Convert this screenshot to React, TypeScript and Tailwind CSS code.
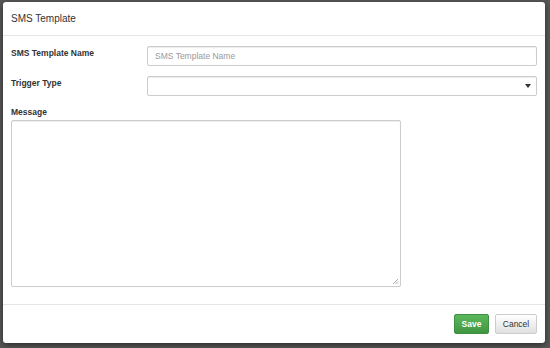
import React from 'react';

export default function App() {
  return (
    <div
      className="w-[550px] h-[348px] bg-[#575757] pt-[2px] pl-[3px]"
      style={{ fontFamily: '"Liberation Sans", Arial, sans-serif' }}
    >
      <div className="w-[542px] h-[341px] bg-white rounded-[3px] flex flex-col shadow-[0_2px_6px_rgba(0,0,0,0.5)]">
        {/* header */}
        <div className="h-[34px] shrink-0 border-b border-[#e5e5e5] px-[8px] pt-[11px] text-[10px] leading-[12px] text-[#333]">
          SMS Template
        </div>

        {/* body */}
        <div className="flex-1 px-[8px] pt-[10px]">
          <div className="flex">
            <label className="w-[136px] shrink-0 pt-[1px] text-[8.5px] leading-[12px] font-bold text-[#333]">
              SMS Template Name
            </label>
            <input
              placeholder="SMS Template Name"
              className="w-[390px] h-[20px] rounded-[2px] border border-[#ccc] px-[7px] text-[8.5px] text-[#555] placeholder:text-[#999] outline-none shadow-[inset_0_1px_1px_rgba(0,0,0,0.075)]"
            />
          </div>
          <div className="flex mt-[10px]">
            <label className="w-[136px] shrink-0 pt-[1px] text-[8.5px] leading-[12px] font-bold text-[#333]">
              Trigger Type
            </label>
            <div className="relative w-[390px] h-[20px] rounded-[2px] border border-[#ccc] shadow-[inset_0_1px_1px_rgba(0,0,0,0.075)]">
              <span className="absolute right-[5px] top-[7px] w-0 h-0 border-l-[3px] border-r-[3px] border-t-[4px] border-l-transparent border-r-transparent border-t-[#333]" />
            </div>
          </div>
          <div className="mt-[10px] text-[8.5px] leading-[12px] font-bold text-[#333]">Message</div>
          <div className="relative mt-[2px] w-[390px] h-[167px] rounded-[2px] border border-[#ccc] shadow-[inset_0_1px_1px_rgba(0,0,0,0.075)]">
            <svg className="absolute right-[1px] bottom-[1px]" width="7" height="7" viewBox="0 0 7 7">
              <path d="M6 1L1 6M6 3.5L3.5 6M6 5.5L5.5 6" stroke="#999" strokeWidth="0.8" />
            </svg>
          </div>
        </div>

        {/* footer */}
        <div className="h-[39px] shrink-0 border-t border-[#e5e5e5] flex items-start justify-end gap-[6px] pr-[8px] pt-[9px]">
          <button className="w-[35px] h-[20px] rounded-[2px] border border-[#3e8f3e] bg-gradient-to-b from-[#5cb85c] to-[#419641] text-white text-[8.5px] font-bold">
            Save
          </button>
          <button className="w-[42px] h-[20px] rounded-[2px] border border-[#ccc] bg-gradient-to-b from-white to-[#e0e0e0] text-[#333] text-[8.5px]">
            Cancel
          </button>
        </div>
      </div>
    </div>
  );
}
